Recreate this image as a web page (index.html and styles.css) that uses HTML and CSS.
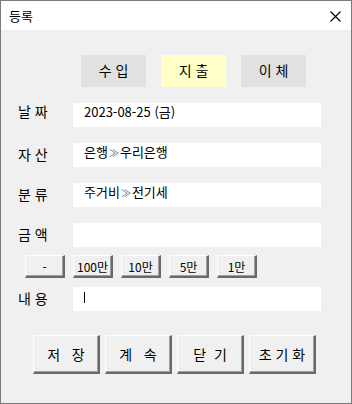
FILE: index.html
```html
<!DOCTYPE html>
<html lang="ko">
<head>
    <meta charset="UTF-8">
    <meta name="viewport" content="width=device-width, initial-scale=1.0">
    <title>등록</title>
    <link rel="stylesheet" href="styles.css">
</head>
<body>
    <div class="window">
        <div class="titlebar">
            <span class="title">등록</span>
            <svg class="close" width="11" height="11" viewBox="0 0 11 11">
                <path d="M0.5 0.5 L10.5 10.5 M10.5 0.5 L0.5 10.5" stroke="#000" stroke-width="1.1" fill="none"/>
            </svg>
        </div>
        <div class="content">
            <div class="tabs">
                <div class="tab">수 입</div>
                <div class="tab active">지 출</div>
                <div class="tab">이 체</div>
            </div>

            <div class="row first">
                <label>날 짜</label>
                <div class="field">2023-08-25 (금)</div>
            </div>
            <div class="row">
                <label>자 산</label>
                <div class="field">은행<span class="sep">≫</span>우리은행</div>
            </div>
            <div class="row">
                <label>분 류</label>
                <div class="field">주거비<span class="sep">≫</span>전기세</div>
            </div>
            <div class="row">
                <label>금 액</label>
                <div class="field"></div>
            </div>

            <div class="quick">
                <button class="btn small">-</button>
                <button class="btn small">100만</button>
                <button class="btn small">10만</button>
                <button class="btn small">5만</button>
                <button class="btn small">1만</button>
            </div>

            <div class="row memo">
                <label>내 용</label>
                <div class="field"><span class="caret"></span></div>
            </div>

            <div class="actions">
                <button class="btn big">저&nbsp;&nbsp;&nbsp;장</button>
                <button class="btn big">계&nbsp;&nbsp;&nbsp;속</button>
                <button class="btn big">닫&nbsp;&nbsp;기</button>
                <button class="btn big">초 기 화</button>
            </div>
        </div>
    </div>
</body>
</html>
```

FILE: styles.css
```css
* {
    box-sizing: border-box;
}
body {
    margin: 0;
    font-family: "Noto Sans CJK KR", "Noto Sans", sans-serif;
    color: #000;
    background: #fff;
}
.window {
    width: 352px;
    height: 404px;
    border: 1px solid #7a7a7a;
    background-color: #f0f0f0;
}
.titlebar {
    height: 29px;
    background: #fff;
    display: flex;
    align-items: center;
    justify-content: space-between;
    padding: 0 10px 0 8px;
}
.title {
    font-size: 13px;
}
.close {
    margin-top: 1px;
}
.tabs {
    display: flex;
    gap: 15px;
    margin: 25px 0 0 80px;
}
.tab {
    width: 65px;
    height: 32px;
    background-color: #e1e1e1;
    font-size: 14px;
    display: flex;
    align-items: center;
    justify-content: center;
    padding-bottom: 2px;
}
.tab.active {
    background-color: #ffffc8;
}
.row {
    display: flex;
    margin-top: 16px;
    padding-left: 17px;
}
.row label {
    width: 55px;
    font-size: 14px;
    line-height: 24px;
    margin-top: -1px;
}
.row.first label {
    margin-top: -4px;
}
.field {
    width: 248px;
    height: 24px;
    background: #fff;
    font-size: 13px;
    line-height: 16px;
    padding: 1px 0 0 11px;
}
.sep {
    font-size: 10px;
    color: #666;
    margin: 0 1px;
}
.caret {
    display: inline-block;
    width: 1px;
    height: 11px;
    background: #000;
    margin-top: 4px;
}
.quick {
    display: flex;
    gap: 8px;
    margin: 8px 0 0 24px;
}
.btn {
    font-family: inherit;
    background-color: #f0f0f0;
    border-style: solid;
    border-color: #fff #696969 #696969 #fff;
    box-shadow: inset -1px -1px 0 #a0a0a0;
    padding: 0;
    color: #000;
}
.small {
    width: 40px;
    height: 23px;
    border-width: 1px 2px 2px 1px;
    font-size: 12px;
    padding-top: 1px;
}
.row.memo {
    margin-top: 9px;
}
.actions {
    display: flex;
    gap: 5px;
    margin: 24px 0 0 32px;
}
.big {
    width: 67px;
    height: 39px;
    border-width: 1px 2px 2px 1px;
    font-size: 14px;
}
```
